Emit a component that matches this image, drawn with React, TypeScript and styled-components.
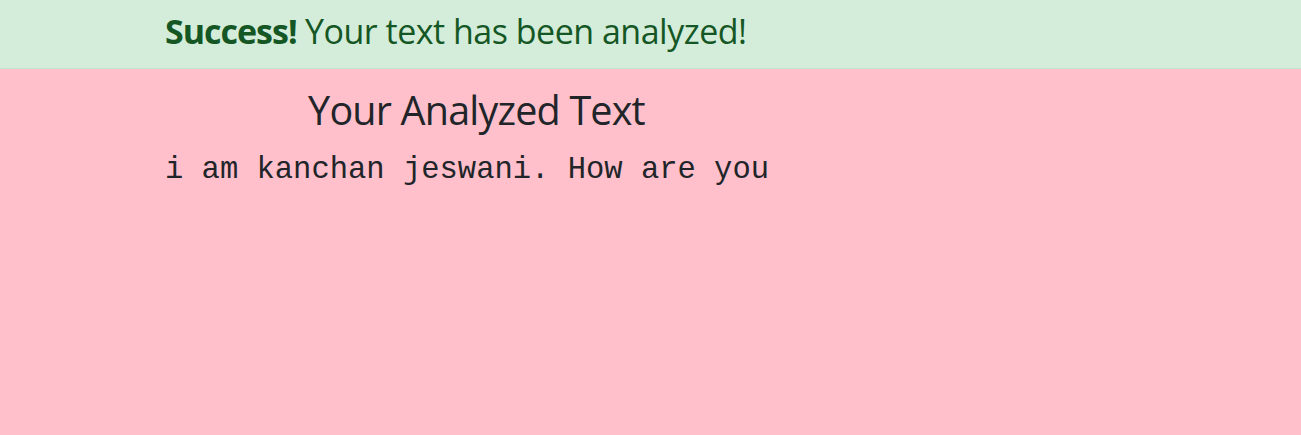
import styled, { createGlobalStyle } from "styled-components";

const GlobalStyle = createGlobalStyle`
  html, body {
    margin: 0;
    padding: 0;
    background: pink;
  }
  body {
    font-family: "Open Sans", "Noto Sans", sans-serif;
  }
`;

export default function App() {
  return (
    <>
      <GlobalStyle />
      <Page>
        <Alert>
          <AlertText>
            <strong>Success!</strong> Your text has been analyzed!
          </AlertText>
        </Alert>
        <Content>
          <Heading>Your Analyzed Text</Heading>
          <Analyzed>i am kanchan jeswani. How are you</Analyzed>
        </Content>
      </Page>
    </>
  );
}

const Page = styled.div`
  min-height: 435px;
  display: flex;
  flex-direction: column;
`;

const Alert = styled.div`
  height: 69px;
  box-sizing: border-box;
  background: #d4edda;
  border-bottom: 1px solid #c3e6cb;
  color: #155724;
  display: flex;
  align-items: center;
  padding: 0 0 6px 165px;
`;

const AlertText = styled.div`
  font-size: 34px;
  letter-spacing: -0.5px;
  strong {
    font-weight: 700;
    letter-spacing: -1px;
  }
`;

const Content = styled.div`
  padding: 17px 0 0 165px;
  display: flex;
  flex-direction: column;
`;

const Heading = styled.h1`
  margin: 0;
  width: 623px;
  text-align: center;
  font-weight: 400;
  font-size: 39.5px;
  line-height: 48px;
  letter-spacing: -0.8px;
  color: #212529;
`;

const Analyzed = styled.div`
  margin-top: 18px;
  font-family: "Liberation Mono", monospace;
  font-size: 30.5px;
  line-height: 36px;
  color: #212529;
`;
